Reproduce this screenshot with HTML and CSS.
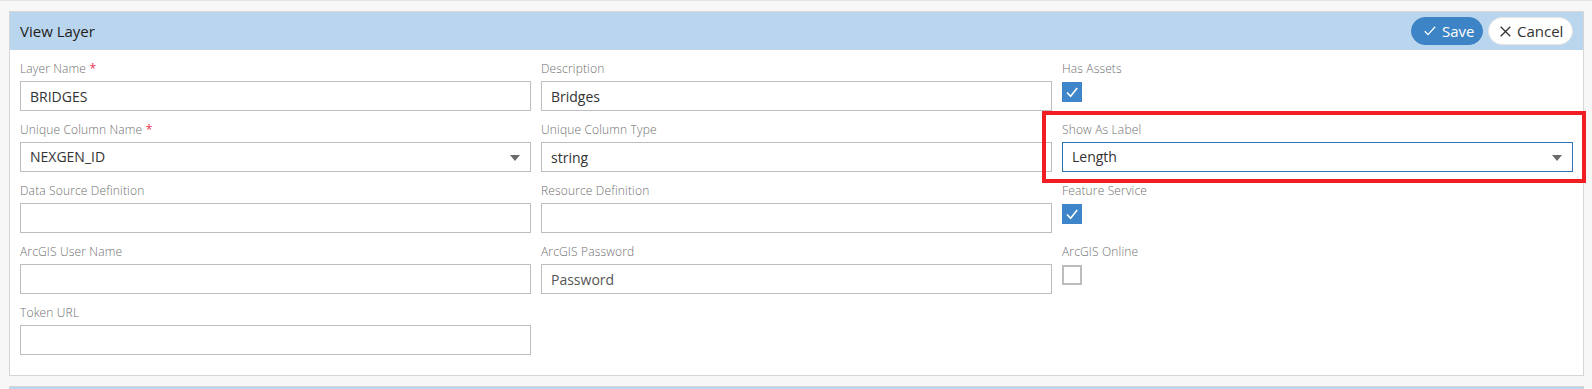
FILE: index.html
```html
<!doctype html>
<html>

<head>
    <title>View Layer</title>
    <link rel="stylesheet" href="styles.css">
</head>

<body>
    <div class="panel">
        <div class="panel-heading">
            <span class="panel-title">View Layer</span>
            <div class="actions">
                <button type="button" class="btn btn-save">
                    <svg width="12" height="10" viewBox="0 0 12 10"><polyline points="0.8,5.2 4,8.6 11.2,0.8" fill="none" stroke="#fff" stroke-width="1.3"/></svg>
                    Save
                </button>
                <button type="button" class="btn btn-cancel">
                    <svg width="11" height="11" viewBox="0 0 11 11"><path d="M0.7 0.7 L10.3 10.3 M10.3 0.7 L0.7 10.3" stroke="#333" stroke-width="1.3"/></svg>
                    Cancel
                </button>
            </div>
        </div>
        <div class="panel-body">
            <div class="field">
                <label>Layer Name <span class="req">*</span></label>
                <input class="control" type="text" value="BRIDGES" readonly>
            </div>
            <div class="field">
                <label>Description</label>
                <input class="control" type="text" value="Bridges" readonly>
            </div>
            <div class="field">
                <label>Has Assets</label>
                <div class="check-wrap"><span class="check checked"><svg width="20" height="20" viewBox="0 0 20 20"><polyline points="5,10.5 8.6,14.2 15.2,6" fill="none" stroke="#fff" stroke-width="1.6"/></svg></span></div>
            </div>

            <div class="field">
                <label>Unique Column Name <span class="req">*</span></label>
                <div class="control select">NEXGEN_ID<span class="caret"></span></div>
            </div>
            <div class="field">
                <label>Unique Column Type</label>
                <input class="control" type="text" value="string" readonly>
            </div>
            <div class="field">
                <label>Show As Label</label>
                <div class="control select focused">Length<span class="caret"></span></div>
            </div>

            <div class="field">
                <label>Data Source Definition</label>
                <input class="control" type="text" readonly>
            </div>
            <div class="field">
                <label>Resource Definition</label>
                <input class="control" type="text" readonly>
            </div>
            <div class="field">
                <label>Feature Service</label>
                <div class="check-wrap"><span class="check checked"><svg width="20" height="20" viewBox="0 0 20 20"><polyline points="5,10.5 8.6,14.2 15.2,6" fill="none" stroke="#fff" stroke-width="1.6"/></svg></span></div>
            </div>

            <div class="field">
                <label>ArcGIS User Name</label>
                <input class="control" type="text" readonly>
            </div>
            <div class="field">
                <label>ArcGIS Password</label>
                <input class="control" type="password" placeholder="Password" readonly>
            </div>
            <div class="field">
                <label>ArcGIS Online</label>
                <div class="check-wrap"><span class="check"></span></div>
            </div>

            <div class="field">
                <label>Token URL</label>
                <input class="control" type="text" readonly>
            </div>
        </div>
    </div>

    <div class="panel next">
        <div class="panel-heading"></div>
    </div>

    <div class="highlight"></div>
</body>

</html>
```

FILE: styles.css
```css
* {
    box-sizing: border-box;
}

body {
    margin: 0;
    padding: 11px 8px 0 9px;
    background-color: #f7f7f7;
    border-top: 1px solid #e4e4e4;
    font-family: "Open Sans", "Noto Sans", sans-serif;
    color: #333;
    overflow: hidden;
}

.panel {
    background-color: white;
    border: 1px solid #d6d6d6;
    margin-top: -1px;
}

.panel.next {
    margin-top: 10px;
}

.panel-heading {
    height: 38px;
    background-color: #bad6ef;
    display: flex;
    justify-content: space-between;
    align-items: center;
    padding: 0 10px;
}

.panel-title {
    font-size: 15px;
    color: #222;
}

.actions {
    display: flex;
    gap: 5px;
}

.btn {
    height: 28px;
    border-radius: 14px;
    font-family: inherit;
    font-size: 15px;
    display: flex;
    align-items: center;
    gap: 6px;
    cursor: pointer;
}

.btn-save {
    width: 72px;
    padding: 0 0 0 12px;
    background-color: #3d84c6;
    border: 1px solid #3d84c6;
    color: white;
}

.btn-cancel {
    width: 85px;
    padding: 0 0 0 11px;
    background-color: white;
    border: 1px solid #e6e6e6;
    color: #333;
}

.panel-body {
    display: grid;
    grid-template-columns: repeat(3, 1fr);
    column-gap: 10px;
    row-gap: 10px;
    padding: 10px 10px 20px;
}

.field label {
    display: block;
    font-size: 12px;
    line-height: 17px;
    font-weight: 300;
    letter-spacing: 0.15px;
    color: #6f6f6f;
    margin-bottom: 4px;
}

.req {
    color: #e8314f;
    font-weight: 400;
}

.control {
    display: block;
    width: 100%;
    height: 30px;
    margin: 0;
    padding: 0 9px;
    border: 1px solid #bdbdbd;
    border-radius: 0;
    background-color: white;
    font-family: inherit;
    font-size: 14px;
    color: #333;
    outline: none;
}

.control::placeholder {
    color: #555;
}

.select {
    position: relative;
    line-height: 28px;
}

.select.focused {
    border-color: #2e73b8;
}

.caret {
    position: absolute;
    right: 10px;
    top: 12px;
    border-left: 5px solid transparent;
    border-right: 5px solid transparent;
    border-top: 6px solid #6b6b6b;
}

.check-wrap {
    height: 30px;
    padding-top: 1px;
}

.check {
    display: block;
    width: 20px;
    height: 20px;
    border: 2px solid #bdbdbd;
    background-color: white;
}

.check.checked {
    border: none;
    background-color: #3f85c9;
}

.check svg {
    display: block;
}

.highlight {
    position: absolute;
    left: 1042px;
    top: 111px;
    width: 544px;
    height: 72px;
    border: 4px solid #f01d23;
}
```
